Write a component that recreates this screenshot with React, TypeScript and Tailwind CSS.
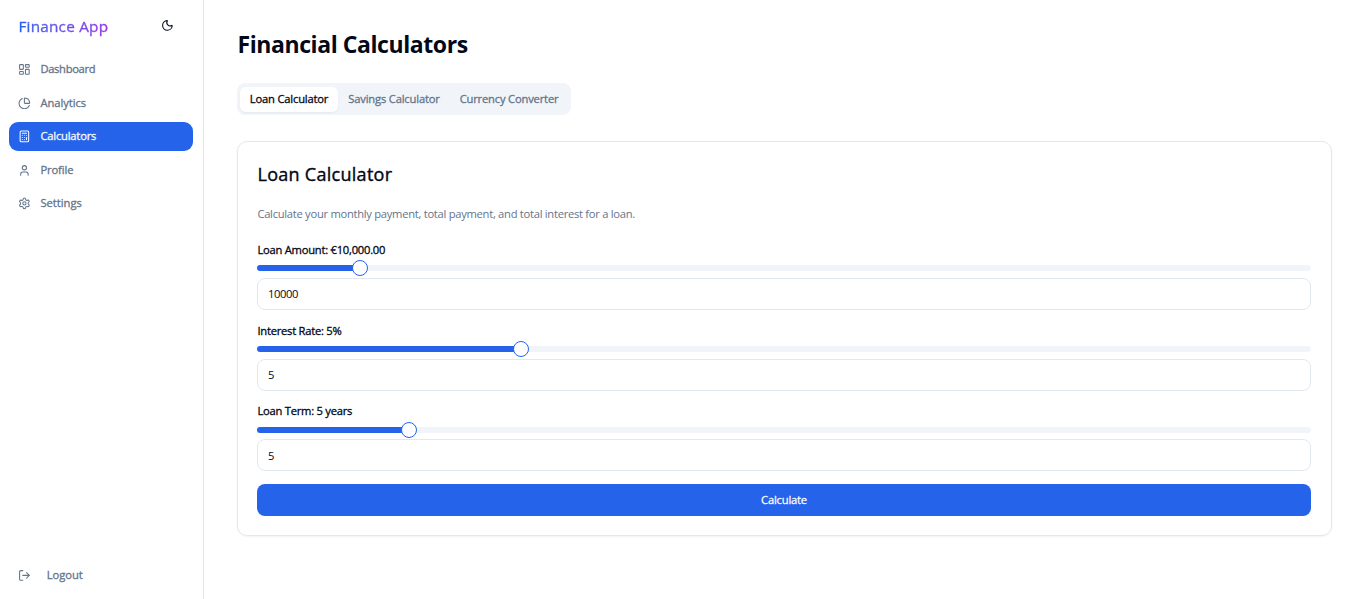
import { useState, type ReactNode } from "react";
import { Calculator, ChartPie, LayoutDashboard, LogOut, Moon, Settings, User } from "lucide-react";

const nav: { label: string; icon: ReactNode; spacing: string }[] = [
  { label: "Dashboard", icon: <LayoutDashboard className="size-[12.8px]" />, spacing: "tracking-[-0.32px]" },
  { label: "Analytics", icon: <ChartPie className="size-[12.8px]" />, spacing: "tracking-[-0.05px]" },
  { label: "Calculators", icon: <Calculator className="size-[12.8px]" />, spacing: "tracking-[-0.2px]" },
  { label: "Profile", icon: <User className="size-[12.8px]" />, spacing: "tracking-[-0.1px]" },
  { label: "Settings", icon: <Settings className="size-[12.8px]" />, spacing: "tracking-[0px]" },
];

function Sidebar() {
  return (
    <aside className="flex w-[204px] shrink-0 flex-col border-r border-slate-200">
      <div className="flex h-[51px] items-center justify-between pr-[29px] pl-[18.5px]">
        <span className="bg-linear-to-r from-[#2563eb] to-[#9333ea] bg-clip-text pt-px text-[15.3px] font-medium tracking-[0.22px] text-transparent [-webkit-text-stroke:0.35px_transparent]">
          Finance App
        </span>
        <Moon className="size-[12.8px] text-slate-950" />
      </div>
      <nav className="flex flex-col gap-[4.6px] pt-1 pr-[10px] pl-[9px]">
        {nav.map((item) => {
          const active = item.label === "Calculators";
          return (
            <a
              key={item.label}
              className={
                "flex h-[28.9px] items-center gap-[9.6px] rounded-[9px] px-[9px] text-[11.2px] font-medium [-webkit-text-stroke:0.3px_currentColor] " +
                item.spacing +
                (active ? " bg-[#2563eb] text-slate-50" : " text-[#64748b]")
              }
            >
              {item.icon}
              {item.label}
            </a>
          );
        })}
      </nav>
      <div className="mt-auto mb-[10px] flex h-7 items-center gap-4 px-[18px] text-[11.2px] font-medium tracking-[-0.05px] text-[#64748b] [-webkit-text-stroke:0.3px_currentColor]">
        <LogOut className="size-[12.8px]" />
        Logout
      </div>
    </aside>
  );
}

type FieldProps = {
  label: string;
  leading: string;
  value: string;
  percent: number;
  onChange: (value: string) => void;
};

function Field({ label, leading, value, percent, onChange }: FieldProps) {
  return (
    <div className="flex h-[80.8px] shrink-0 flex-col">
      <label
        className={
          "h-[19.8px] pl-[0.4px] text-[11.2px] font-medium tracking-[-0.24px] [-webkit-text-stroke:0.3px_currentColor] " +
          leading
        }
      >
        {label}
      </label>
      <div className="relative flex h-4 items-center">
        <div className="h-[6px] w-full overflow-hidden rounded-full bg-slate-100">
          <div className="h-full bg-[#2563eb]" style={{ width: percent + "%" }} />
        </div>
        <span
          className="absolute top-0 size-4 -translate-x-1/2 rounded-full border border-[#2563eb] bg-white"
          style={{ left: percent + "%" }}
        />
      </div>
      <input
        className="mt-[1.6px] h-8 w-full rounded-lg border border-slate-200 bg-white px-[10px] text-[11.2px] tracking-[-0.4px] outline-none"
        value={value}
        onChange={(e) => onChange(e.target.value)}
      />
    </div>
  );
}

const tabs = [
  { label: "Loan Calculator", width: "w-[98px]" },
  { label: "Savings Calculator", width: "w-[112px]" },
  { label: "Currency Converter", width: "w-[118px]" },
];

export default function App() {
  const [amount, setAmount] = useState("10000");
  const [rate, setRate] = useState("5");
  const [term, setTerm] = useState("5");
  return (
    <div className="flex h-screen overflow-hidden bg-white font-['Open_Sans','Noto_Sans',sans-serif] text-[#020817]">
      <Sidebar />
      <main className="flex min-w-0 flex-1 flex-col items-start pt-[28px] pr-5 pl-[33px]">
        <h1 className="h-[55px] pl-[0.5px] text-[23px] leading-8 font-bold tracking-[-0.42px]">Financial Calculators</h1>
        <div className="flex h-8 w-[334px] items-center rounded-lg bg-slate-100 p-[3px]">
          {tabs.map((tab, i) => (
            <button
              key={tab.label}
              className={
                "flex h-[25px] items-center justify-center rounded-md text-[11.2px] font-medium tracking-[-0.18px] whitespace-nowrap [-webkit-text-stroke:0.3px_currentColor] " +
                tab.width +
                (i === 0 ? " bg-white shadow-xs" : " text-[#64748b]")
              }
            >
              {tab.label}
            </button>
          ))}
        </div>
        <section className="mt-[26px] flex h-[395px] w-full flex-col rounded-[10px] border border-slate-200 pr-5 pl-[19px] shadow-xs">
          <h2 className="mt-[18px] pl-[0.5px] text-[18px] leading-7 font-medium tracking-[0.28px] [-webkit-text-stroke:0.4px_currentColor]">
            Loan Calculator
          </h2>
          <p className="mt-[18px] h-[34.4px] shrink-0 pl-[0.4px] text-[11.2px] leading-4 tracking-[-0.28px] text-[#64748b]">
            Calculate your monthly payment, total payment, and total interest for a loan.
          </p>
          <Field
            label="Loan Amount: €10,000.00"
            leading="leading-[19px]"
            value={amount}
            percent={9.8}
            onChange={setAmount}
          />
          <Field label="Interest Rate: 5%" leading="leading-[19px]" value={rate} percent={25} onChange={setRate} />
          <Field label="Loan Term: 5 years" leading="leading-[18.4px]" value={term} percent={14.4} onChange={setTerm} />
          <button className="mt-[1.2px] h-8 shrink-0 rounded-lg bg-[#2563eb] text-[11.2px] font-medium tracking-[-0.2px] text-slate-50 [-webkit-text-stroke:0.3px_currentColor]">
            Calculate
          </button>
        </section>
      </main>
    </div>
  );
}
